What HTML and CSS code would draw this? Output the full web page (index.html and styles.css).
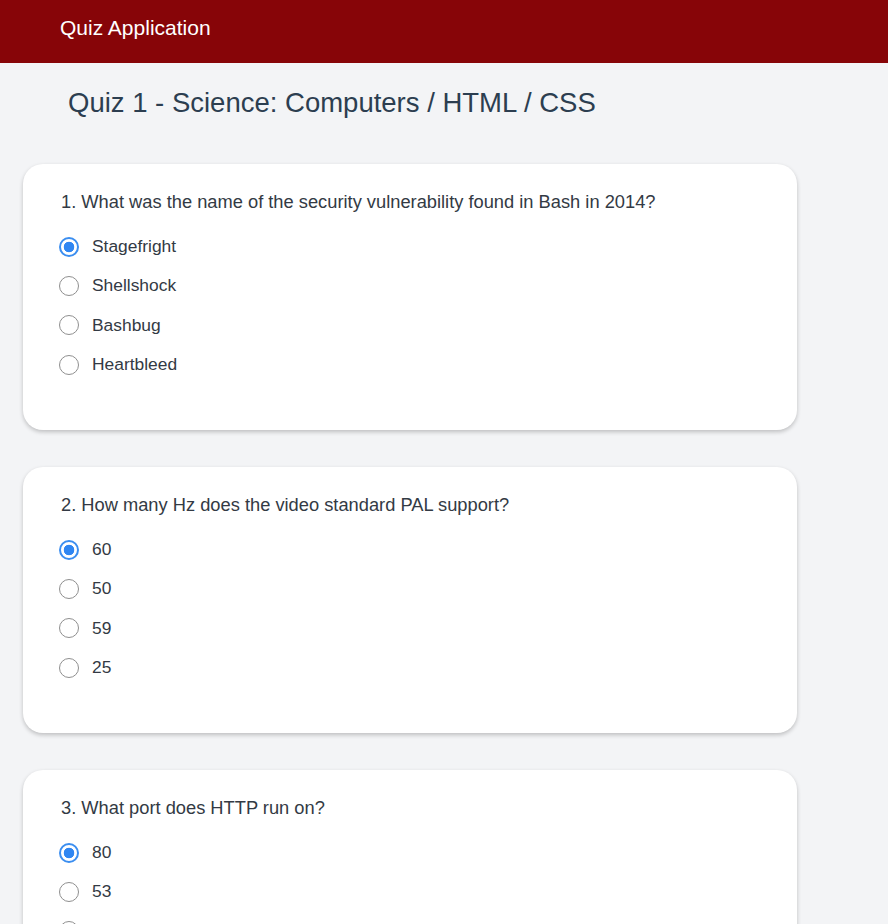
FILE: index.html
```html
<!DOCTYPE html>
<html>
<head>
<meta charset="utf-8">
<link rel="stylesheet" href="styles.css">
</head>
<body>
<header class="topbar"><span class="brand">Quiz Application</span></header>
<main class="page">
  <h1 class="quiz-title">Quiz 1 - Science: Computers / HTML / CSS</h1>
  <section class="card">
    <p class="question">1. What was the name of the security vulnerability found in Bash in 2014?</p>
    <div class="options">
      <label class="option"><input type="radio" name="q1" checked><span>Stagefright</span></label>
      <label class="option"><input type="radio" name="q1"><span>Shellshock</span></label>
      <label class="option"><input type="radio" name="q1"><span>Bashbug</span></label>
      <label class="option"><input type="radio" name="q1"><span>Heartbleed</span></label>
    </div>
  </section>
  <section class="card">
    <p class="question">2. How many Hz does the video standard PAL support?</p>
    <div class="options">
      <label class="option"><input type="radio" name="q2" checked><span>60</span></label>
      <label class="option"><input type="radio" name="q2"><span>50</span></label>
      <label class="option"><input type="radio" name="q2"><span>59</span></label>
      <label class="option"><input type="radio" name="q2"><span>25</span></label>
    </div>
  </section>
  <section class="card">
    <p class="question">3. What port does HTTP run on?</p>
    <div class="options">
      <label class="option"><input type="radio" name="q3" checked><span>80</span></label>
      <label class="option"><input type="radio" name="q3"><span>53</span></label>
      <label class="option"><input type="radio" name="q3"><span>443</span></label>
      <label class="option"><input type="radio" name="q3"><span>23</span></label>
    </div>
  </section>
</main>
</body>
</html>
```
FILE: styles.css
```css
* { box-sizing: border-box; }
html, body { margin: 0; padding: 0; }
body {
  background: #f3f4f6;
  font-family: "Liberation Sans", Arial, sans-serif;
  color: #2d3748;
}
.topbar {
  height: 63px;
  background: #870508;
  display: flex;
  align-items: center;
  padding-left: 60px;
}
.brand {
  color: #ffffff;
  font-size: 21px;
  line-height: 24px;
  padding-bottom: 7px;
}
.page {
  width: 774px;
  margin-left: 23px;
  padding-bottom: 40px;
}
.quiz-title {
  margin: 25px 0 46px 45px;
  font-weight: normal;
  font-size: 27.5px;
  line-height: 30px;
  color: #2c3e50;
}
.card {
  background: #ffffff;
  border-radius: 20px;
  box-shadow: 0 2px 4px rgba(0,0,0,0.22);
  padding: 26px 38px 45px;
  margin-bottom: 37px;
  height: 266px;
}
.question {
  margin: 0 0 13px 0;
  font-size: 18.3px;
  line-height: 24px;
  color: #333a44;
}
.options {
  display: grid;
  grid-auto-rows: 39.33px;
}
.option {
  display: flex;
  align-items: center;
  gap: 13px;
  font-size: 17.4px;
  color: #333a44;
}
.option input {
  appearance: none;
  -webkit-appearance: none;
  margin: 0 0 0 -2px;
  width: 20px;
  height: 20px;
  border-radius: 50%;
  border: 1px solid #8f8f8f;
  background: #fff;
  flex: none;
}
.option input:checked {
  border: 2px solid #3b8ef0;
  background: radial-gradient(circle, #2f86f2 0 5px, #ffffff 5.6px);
}
```
